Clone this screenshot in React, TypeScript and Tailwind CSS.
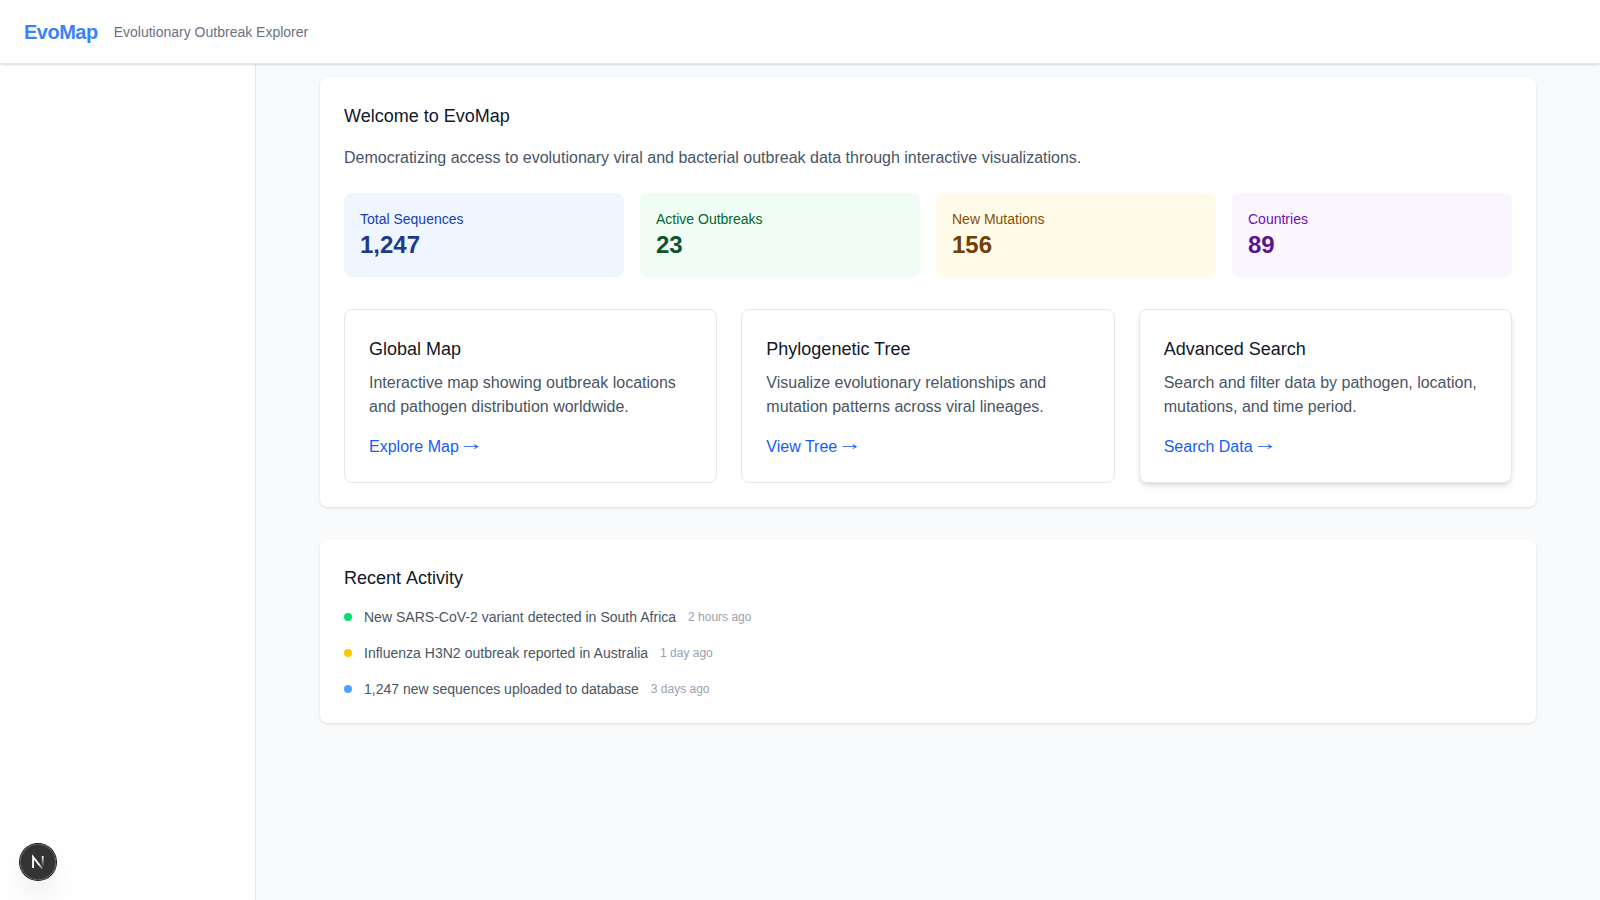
const stats = [
  { label: 'Total Sequences', value: '1,247', box: 'bg-blue-50', l: 'text-blue-800', v: 'text-blue-900' },
  { label: 'Active Outbreaks', value: '23', box: 'bg-green-50', l: 'text-green-800', v: 'text-green-900' },
  { label: 'New Mutations', value: '156', box: 'bg-yellow-50', l: 'text-yellow-800', v: 'text-yellow-900' },
  { label: 'Countries', value: '89', box: 'bg-purple-50', l: 'text-purple-800', v: 'text-purple-900' },
];

const cards = [
  { title: 'Global Map', text: 'Interactive map showing outbreak locations and pathogen distribution worldwide.', link: 'Explore Map', shadow: '' },
  { title: 'Phylogenetic Tree', text: 'Visualize evolutionary relationships and mutation patterns across viral lineages.', link: 'View Tree', shadow: '' },
  { title: 'Advanced Search', text: 'Search and filter data by pathogen, location, mutations, and time period.', link: 'Search Data', shadow: 'shadow-md' },
];

const activity = [
  { dot: 'bg-green-400', text: 'New SARS-CoV-2 variant detected in South Africa', time: '2 hours ago', spacing: '[word-spacing:0.13px]' },
  { dot: 'bg-yellow-400', text: 'Influenza H3N2 outbreak reported in Australia', time: '1 day ago', spacing: '[word-spacing:0.15px]' },
  { dot: 'bg-blue-400', text: '1,247 new sequences uploaded to database', time: '3 days ago', spacing: '' },
];

function DevBadge() {
  return (
    <div className="fixed bottom-5 left-5 flex size-9 items-center justify-center rounded-full bg-black/80 shadow-[0_0_0_1px_#171717,inset_0_0_0_1px_hsla(0,0%,100%,0.14),0px_16px_32px_-8px_rgba(0,0,0,0.24)]">
      <svg width="40" height="40" viewBox="0 0 40 40" fill="none" className="shrink-0">
        <defs>
          <linearGradient id="diag" x1="21" y1="22" x2="25.4" y2="27.5" gradientUnits="userSpaceOnUse">
            <stop stopColor="white" />
            <stop offset="0.6" stopColor="white" stopOpacity="0.4" />
            <stop offset="1" stopColor="white" stopOpacity="0" />
          </linearGradient>
          <linearGradient id="stem" x1="25" y1="14" x2="25" y2="25" gradientUnits="userSpaceOnUse">
            <stop stopColor="white" />
            <stop offset="1" stopColor="white" stopOpacity="0" />
          </linearGradient>
        </defs>
        <path d="M15.1 26V15L24.4 26.8" stroke="url(#diag)" strokeWidth="1.9" />
        <path d="M24.7 14V25" stroke="url(#stem)" strokeWidth="1.8" />
      </svg>
    </div>
  );
}

export default function App() {
  return (
    <div className="flex h-screen flex-col overflow-hidden bg-gray-50 font-[Helvetica,'Liberation_Sans',Arial,sans-serif] text-gray-900">
      <header className="z-10 flex h-16 shrink-0 items-center border-b border-gray-200 bg-white px-6 shadow-sm">
        <span className="text-xl font-bold tracking-tight text-[#3b82f6]">EvoMap</span>
        <span className="ml-4 text-sm text-gray-500">Evolutionary Outbreak Explorer</span>
      </header>
      <div className="flex min-h-0 flex-1">
        <aside className="w-64 shrink-0 border-r border-gray-200 bg-white" />
        <main className="flex-1 px-16 pt-[13px]">
          <section className="rounded-lg bg-white p-6 pt-[25px] shadow-sm">
            <h1 className="mb-4 text-lg leading-7">Welcome to EvoMap</h1>
            <p className="mb-[23px] text-gray-600">
              Democratizing access to evolutionary viral and bacterial outbreak data through interactive visualizations.
            </p>
            <div className="mb-8 grid grid-cols-4 gap-4">
              {stats.map((s) => (
                <div key={s.label} className={`rounded-lg p-4 ${s.box}`}>
                  <div className={`text-sm ${s.l}`}>{s.label}</div>
                  <div className={`text-2xl font-bold ${s.v}`}>{s.value}</div>
                </div>
              ))}
            </div>
            <div className="grid grid-cols-3 gap-6">
              {cards.map((c) => (
                <div key={c.title} className={`rounded-lg border border-gray-200 bg-white px-6 pt-[25px] pb-[23px] ${c.shadow}`}>
                  <h2 className="mb-2 text-lg">{c.title}</h2>
                  <p className="mb-4 text-gray-600">{c.text}</p>
                  <a className="block h-6 text-blue-600">
                    {c.link}{' '}
                    <span className="inline-block scale-y-60 align-[-1px] font-['Noto_Sans_CJK_SC',sans-serif] leading-none">→</span>
                  </a>
                </div>
              ))}
            </div>
          </section>
          <section className="mt-8 rounded-lg bg-white p-6 pt-[25px] shadow-sm">
            <h2 className="mb-[15px] text-lg [word-spacing:1px]">Recent Activity</h2>
            <div className="space-y-4">
              {activity.map((a) => (
                <div key={a.text} className="flex items-center gap-3">
                  <span className={`size-2 rounded-full ${a.dot}`} />
                  <span className={`text-sm text-gray-600 ${a.spacing}`}>{a.text}</span>
                  <span className="text-xs text-gray-400">{a.time}</span>
                </div>
              ))}
            </div>
          </section>
        </main>
      </div>
      <DevBadge />
    </div>
  );
}
